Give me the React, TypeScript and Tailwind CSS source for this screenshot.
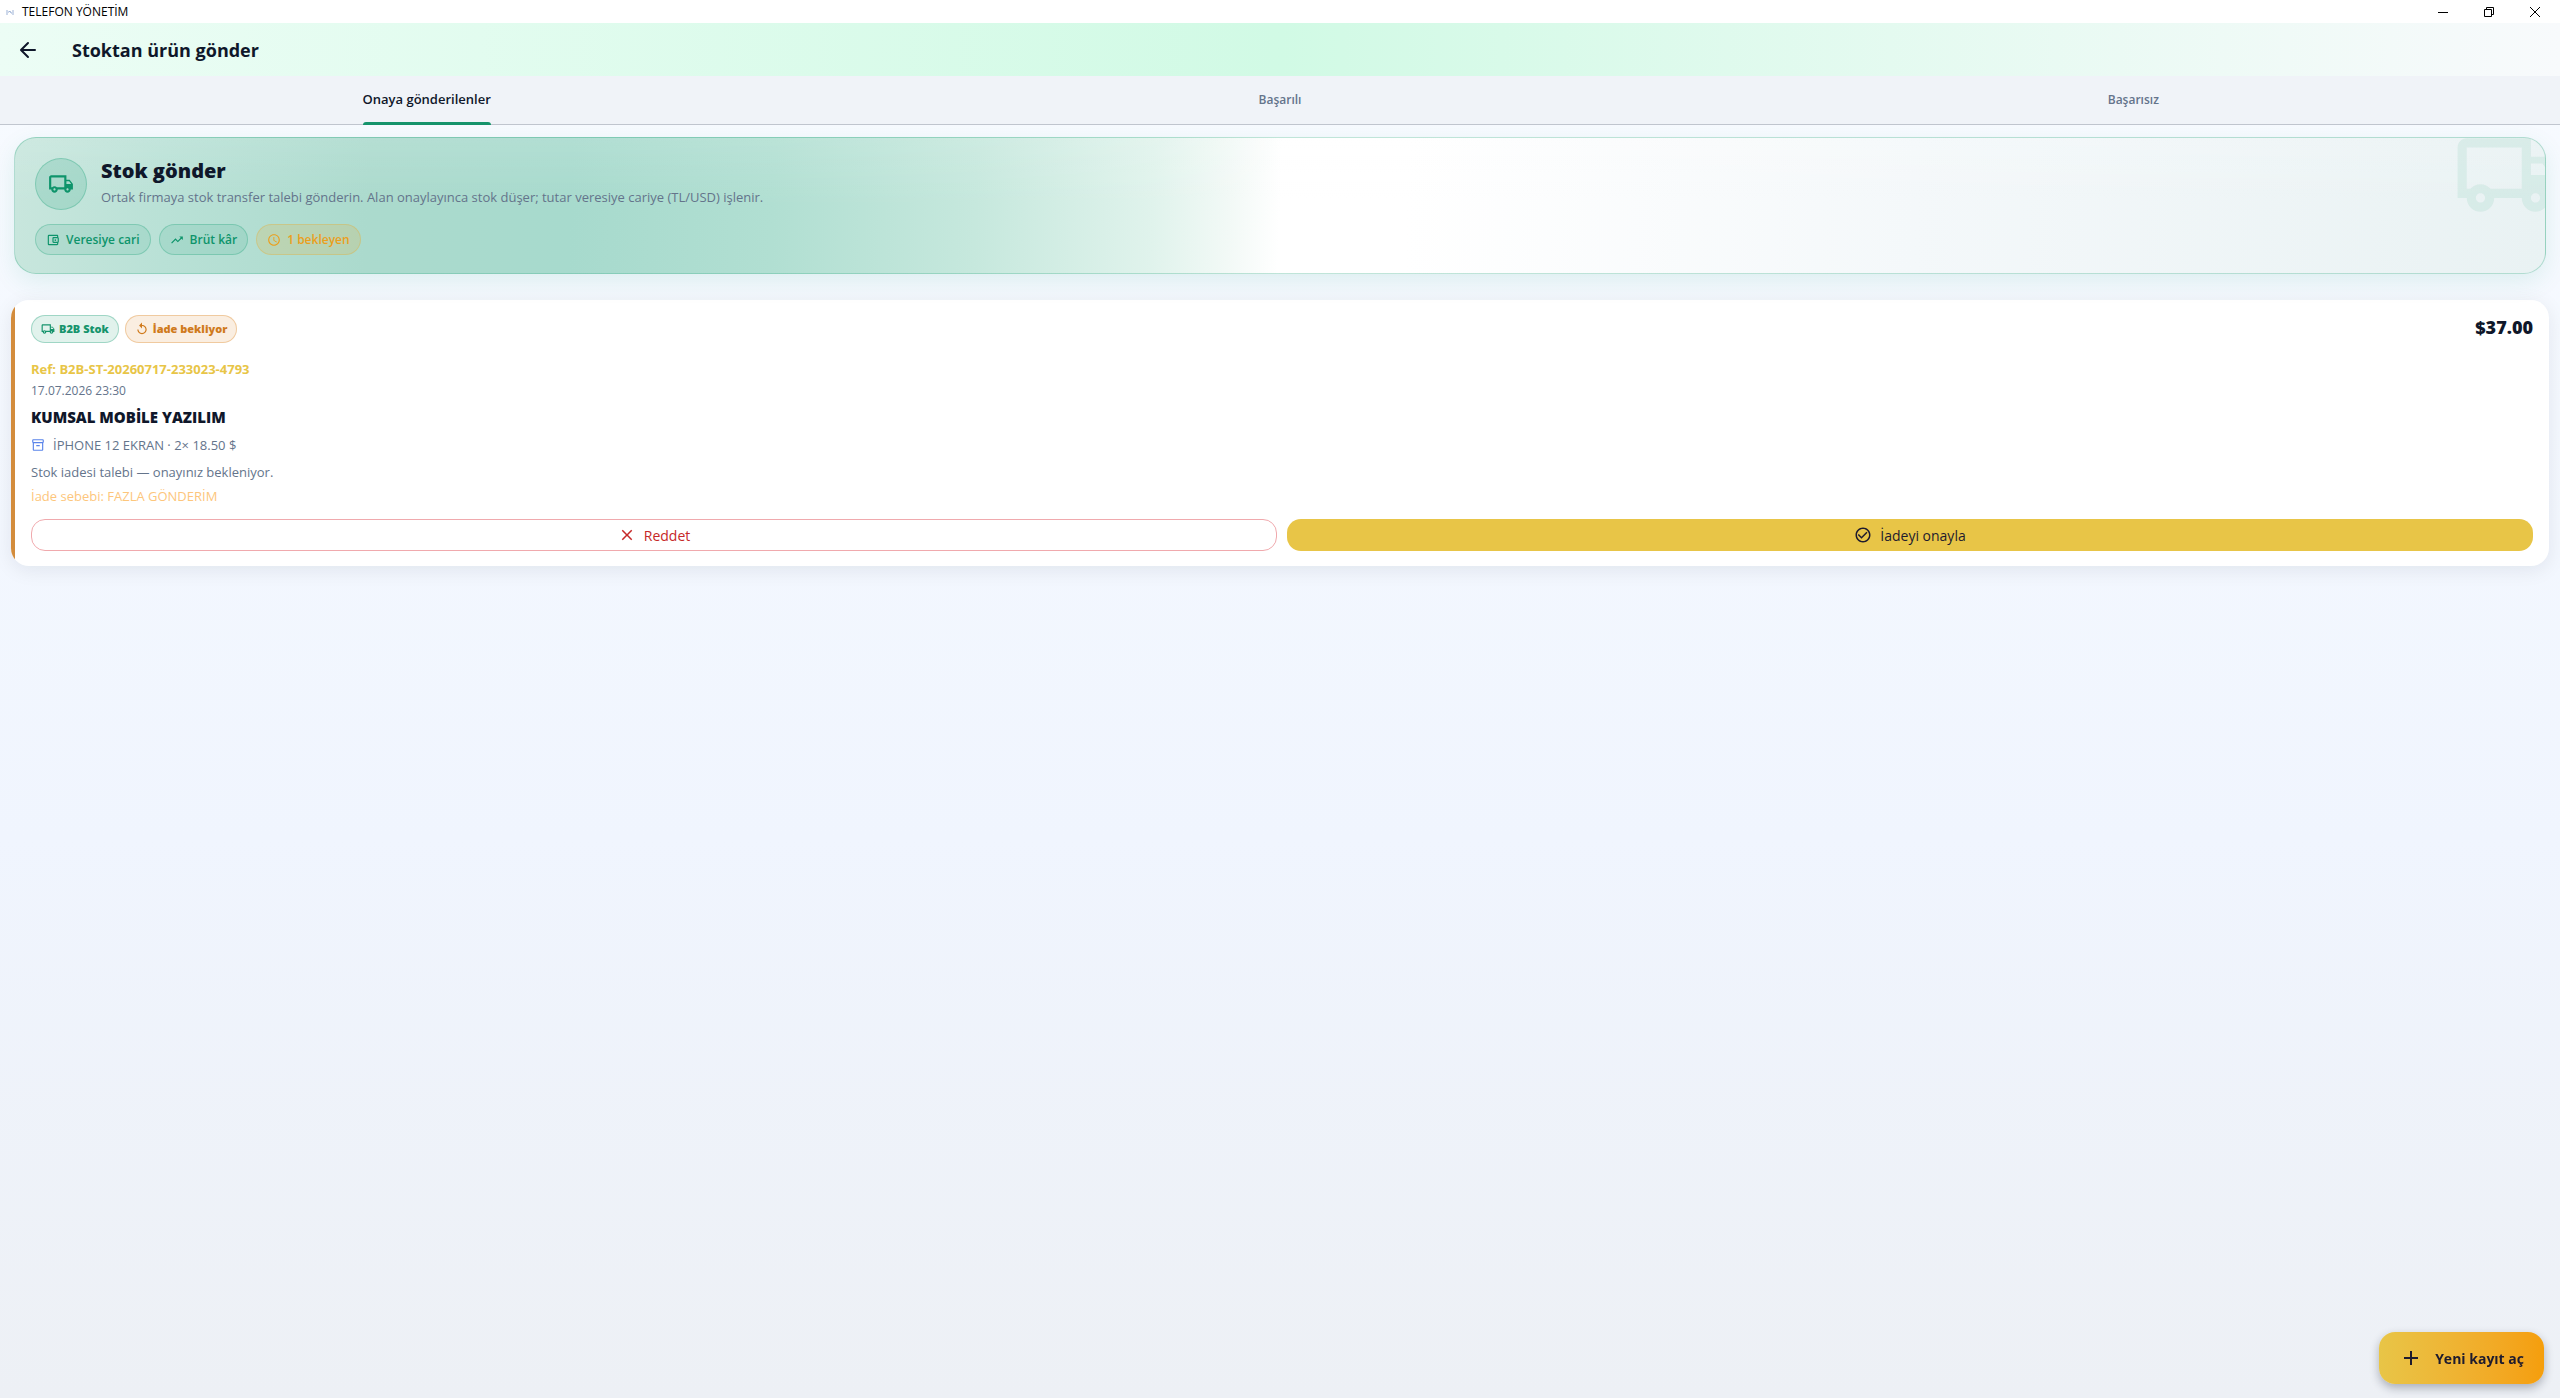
import React from 'react';
import {
  MdAdd,
  MdOutlineAccountBalanceWallet,
  MdOutlineInventory2,
  MdReplay,
  MdSchedule,
  MdTrendingUp,
  MdCheckCircleOutline,
  MdClose
} from 'react-icons/md';

const tabs = ['Onaya gönderilenler', 'Başarılı', 'Başarısız'];

const TruckIcon = ({ className }: { className: string }) => (
  <svg className={className} viewBox="0 0 24 24" fill="currentColor" aria-hidden="true">
    <path d="M20 8h-3V4H3c-1.1 0-2 .9-2 2v11h2c0 1.66 1.34 3 3 3s3-1.34 3-3h6c0 1.66 1.34 3 3 3s3-1.34 3-3h2v-5l-3-4zm-.5 1.5l1.96 2.5H17V9.5h2.5zM6 18c-.55 0-1-.45-1-1s.45-1 1-1 1 .45 1 1-.45 1-1 1zm2.22-3c-.55-.61-1.33-1-2.22-1s-1.67.39-2.22 1H3V6h12v9H8.22zM18 18c-.55 0-1-.45-1-1s.45-1 1-1 1 .45 1 1-.45 1-1 1z" />
  </svg>
);

const TitleBar = () => (
  <div className="flex h-[23px] items-center justify-between bg-white text-black">
    <div className="flex items-center gap-2 pl-1.5">
      <svg className="h-3 w-2" viewBox="0 0 8 12" fill="none" stroke="#9db2d6">
        <path d="M1 4v5M7 4v5M2 6h1l1-1 1 2h1" />
      </svg>
      <span className="text-[12px] leading-4">TELEFON YÖNETİM</span>
    </div>
    <div className="flex items-center gap-[34px] pr-[19px]">
      <button aria-label="Simge durumuna küçült">
        <svg className="h-3 w-3" viewBox="0 0 12 12" stroke="currentColor">
          <path d="M1 6.5h10" />
        </svg>
      </button>
      <button aria-label="Geri yükle">
        <svg className="h-3 w-3" viewBox="0 0 12 12" fill="none" stroke="currentColor">
          <path d="M1.5 3.5h7v7h-7zM3.5 3.5v-2h7v7h-2" />
        </svg>
      </button>
      <button aria-label="Kapat">
        <svg className="h-3 w-3" viewBox="0 0 12 12" stroke="currentColor">
          <path d="M1 1l10 10M11 1L1 11" />
        </svg>
      </button>
    </div>
  </div>
);

const AppBar = () => (
  <header className="flex h-[53px] items-center bg-linear-to-r from-[#ecfdf5] via-[#d1fae5] to-[#f8fafc] px-4">
    <button aria-label="Geri">
      <svg className="size-6" viewBox="0 0 24 24" fill="none" stroke="currentColor" strokeWidth="2" strokeLinecap="round" strokeLinejoin="round">
        <path d="M19 12H5.5M12 19l-7-7 7-7" />
      </svg>
    </button>
    <h1 className="pl-8 text-[18px] leading-6 font-bold">Stoktan ürün gönder</h1>
  </header>
);

const TabBar = () => (
  <nav className="grid h-[49px] grid-cols-3 border-b border-[#c1c6cf] bg-[#f0f3f8]" role="tablist">
    {tabs.map((tab, i) => (
      <div key={tab} className="flex justify-center">
        <button
          role="tab"
          aria-selected={i === 0}
          className={
            i === 0
              ? 'relative h-12 text-[13px] font-semibold'
              : 'h-12 text-[12px] font-semibold text-[#64748b]'
          }
        >
          {tab}
          {i === 0 && (
            <span className="absolute inset-x-0 -bottom-px h-[3px] rounded-t-[3px] bg-[#16946c]" />
          )}
        </button>
      </div>
    ))}
  </nav>
);

const Hero = () => (
  <section className="relative mx-3.5 mt-3 overflow-hidden rounded-[22px] border border-[#059669]/25 bg-[linear-gradient(to_bottom,rgba(255,255,255,0.12),transparent_50%),linear-gradient(92deg,#c8e6dd_0%,#b9e1d6_6%,#abdacd_14%,#a7dacd_22%,#b1dfd2_30%,#c6e8dd_38%,#e0f3ec_45%,#f2f9f6_48%,#ffffff_50%,#ffffff_55%,#f4f8fa_75%,#e9f2f3_100%)] px-5 pt-5 pb-[18px] shadow-[0_8px_24px_rgba(5,150,105,0.1)]">
    <TruckIcon className="absolute -top-[18px] -right-[18px] size-[110px] text-[#059669]/8" />
    <div className="flex items-center gap-3.5">
      <div className="flex size-[52px] items-center justify-center rounded-full border border-[#059669]/25 bg-[#059669]/15 text-[#0e946b]">
        <TruckIcon className="size-[26px]" />
      </div>
      <div>
        <h2 className="text-[20px] leading-[26px] font-extrabold">Stok gönder</h2>
        <p className="text-[13px] leading-[26px] text-[#64748b]">
          Ortak firmaya stok transfer talebi gönderin. Alan onaylayınca stok düşer; tutar veresiye cariye (TL/USD) işlenir.
        </p>
      </div>
    </div>
    <div className="mt-3.5 flex gap-2 text-[12px] font-semibold text-[#0e946b]">
      <span className="flex h-[31px] items-center gap-1.5 rounded-full border border-[#059669]/25 bg-[#059669]/10 px-2.5">
        <MdOutlineAccountBalanceWallet className="size-3.5" />
        Veresiye cari
      </span>
      <span className="flex h-[31px] items-center gap-1.5 rounded-full border border-[#059669]/25 bg-[#059669]/10 px-2.5">
        <MdTrendingUp className="size-3.5" />
        Brüt kâr
      </span>
      <span className="flex h-[31px] items-center gap-1.5 rounded-full border border-[#f59e0b]/25 bg-[#f59e0b]/15 px-2.5 text-[#eb9f1c]">
        <MdSchedule className="size-3.5" />
        1 bekleyen
      </span>
    </div>
  </section>
);

const TransferCard = () => (
  <article className="mx-[11px] mt-[26px] flex overflow-hidden rounded-[18px] bg-white shadow-[0_4px_20px_rgba(15,23,42,0.08)]">
    <div className="w-1 bg-[#d38c3c]" />
    <div className="flex-1 px-4 py-[15px]">
      <div className="flex items-start justify-between">
        <div className="flex gap-1.5 text-[11px] font-extrabold">
          <span className="flex h-7 items-center gap-1 rounded-full border border-[#059669]/30 bg-[#e1f2ec] px-[9px] text-[#16946c]">
            <TruckIcon className="size-3.5" />
            B2B Stok
          </span>
          <span className="flex h-7 items-center gap-1 rounded-full border border-[#d97706]/30 bg-[#faeee1] px-[9px] text-[#d07a1c]">
            <MdReplay className="size-3.5" />
            İade bekliyor
          </span>
        </div>
        <strong className="text-[18px] leading-6 font-extrabold">$37.00</strong>
      </div>
      <p className="mt-3.5 text-[13px] leading-6 font-bold text-[#e8c547]">Ref: B2B-ST-20260717-233023-4793</p>
      <p className="text-[12px] leading-5 text-[#64748b]">17.07.2026 23:30</p>
      <h3 className="mt-1 text-[15px] leading-6 font-extrabold">KUMSAL MOBİLE YAZILIM</h3>
      <p className="mt-1 flex items-center gap-2 text-[13px] leading-6 font-medium text-[#64748b]">
        <MdOutlineInventory2 className="size-3.5 text-[#5b85ea]" />
        İPHONE 12 EKRAN · 2× 18.50 $
      </p>
      <p className="mt-[3px] text-[13px] leading-6 text-[#64748b]">Stok iadesi talebi — onayınız bekleniyor.</p>
      <p className="text-[13px] leading-6 font-medium text-[#fdc67c]">İade sebebi: FAZLA GÖNDERİM</p>
      <div className="mt-[11px] grid grid-cols-2 gap-2.5 text-[14px] font-medium">
        <button className="flex h-8 items-center justify-center gap-2 rounded-[14px] border border-[#f0a9ad] text-[#c62828]">
          <MdClose className="size-[18px]" />
          Reddet
        </button>
        <button className="flex h-8 items-center justify-center gap-2 rounded-[14px] bg-[#e8c547] text-[#1e1b2e]">
          <MdCheckCircleOutline className="size-[18px]" />
          İadeyi onayla
        </button>
      </div>
    </div>
  </article>
);

export default function App() {
  return (
    <div className="flex min-h-screen flex-col bg-linear-to-b from-[#f8fbff] via-[#f0f5fe] via-60% to-[#edf0f5] font-['Open_Sans','Noto_Sans',sans-serif] text-[#0f172a]">
      <TitleBar />
      <AppBar />
      <TabBar />
      <main>
        <Hero />
        <TransferCard />
      </main>
      <button className="fixed right-4 bottom-3.5 flex h-[52px] items-center gap-3 rounded-2xl bg-linear-to-r from-[#e8c547] to-[#f59e0b] px-5 text-[14px] font-bold text-[#1e1b2e] shadow-[0_4px_10px_rgba(15,23,42,0.3)]">
        <MdAdd className="size-6" />
        Yeni kayıt aç
      </button>
    </div>
  );
}
